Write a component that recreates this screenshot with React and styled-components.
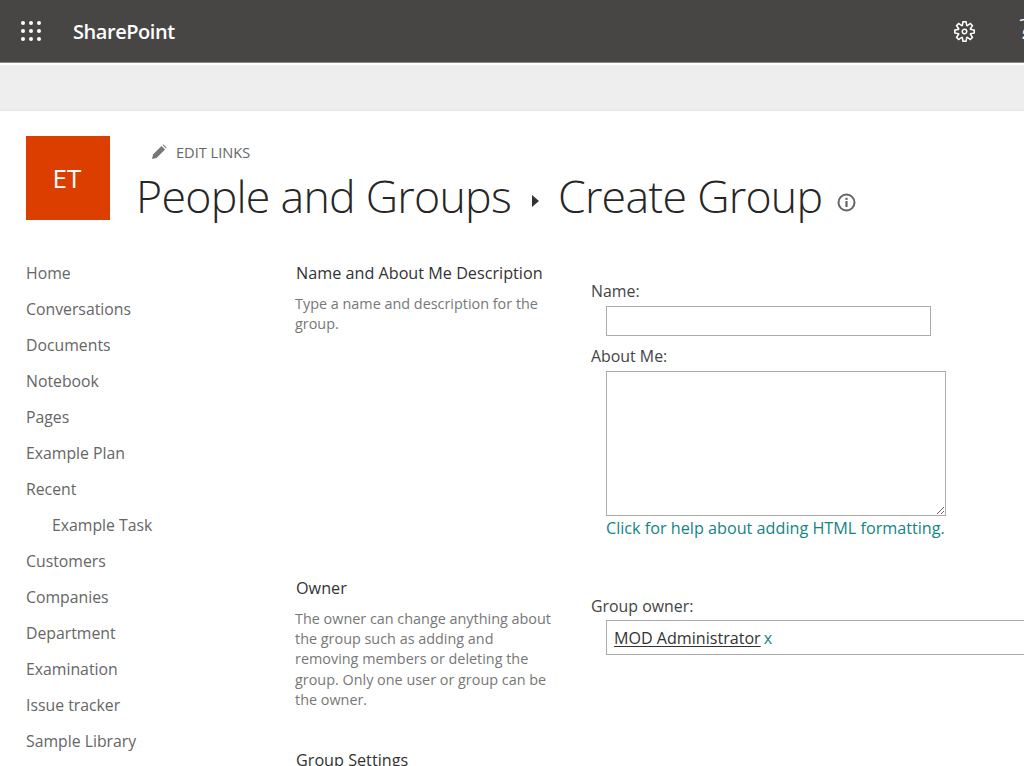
import React from "react";
import styled, { createGlobalStyle } from "styled-components";
import { VscSettingsGear } from "react-icons/vsc";

const Global = createGlobalStyle`
  html, body { margin: 0; padding: 0; background: #fff; }
  body { font-family: "Open Sans", "Noto Sans", sans-serif; color: #333; }
`;

const Page = styled.div`
  width: 1024px;
  height: 766px;
  overflow: hidden;
`;

const SuiteBar = styled.header`
  height: 62px;
  background: #484644;
  border-bottom: 1px solid #8a8886;
  display: flex;
  align-items: center;
  padding: 0 0 0 21px;
  color: #fff;
`;

const Brand = styled.span`
  margin-left: 32px;
  font-size: 20px;
  font-weight: 600;
  letter-spacing: -0.45px;
`;

const BarIcons = styled.div`
  margin-left: auto;
  display: flex;
  align-items: center;
  width: 70px;
  gap: 44px;
  overflow: hidden;
  height: 100%;
`;

const GearIcon = styled(VscSettingsGear)`
  flex: none;
  color: #fff;
`;

const HelpGlyph = styled.span`
  font-size: 28px;
  font-weight: 300;
  line-height: 1;
  margin-top: -6px;
`;

const RibbonBand = styled.div`
  margin-top: 2px;
  height: 45px;
  background: #eeeeee;
  border-bottom: 1px solid #e4e4e4;
`;

const TitleRow = styled.div`
  display: flex;
  padding: 25px 0 0 26px;
  height: 103px;
`;

const SiteLogo = styled.div`
  width: 84px;
  height: 84px;
  background: #dc3e00;
  color: #fff;
  font-size: 26px;
  padding-right: 2px;
  box-sizing: border-box;
  display: flex;
  align-items: center;
  justify-content: center;
`;

const TitleBlock = styled.div`
  margin-left: 26px;
`;

const EditLinks = styled.div`
  display: flex;
  align-items: center;
  gap: 9px;
  margin-left: 15px;
  margin-top: 4px;
  height: 24px;
  font-size: 14.6px;
  color: #666;
`;

const PageTitle = styled.h1`
  margin: 4px 0 0;
  display: flex;
  align-items: center;
  font-size: 44.7px;
  font-weight: 300;
  line-height: 56px;
  letter-spacing: -0.75px;
  color: #262626;
  white-space: nowrap;
`;

const Caret = styled.span`
  width: 0;
  height: 0;
  margin: 9px 19px 0 21px;
  border-left: 7px solid #333;
  border-top: 6px solid transparent;
  border-bottom: 6px solid transparent;
`;

const InfoIcon = styled.svg`
  margin: 13px 0 0 15px;
`;

const Content = styled.div`
  display: flex;
  padding-left: 26px;
  margin-top: 16px;
`;

const LeftNav = styled.nav`
  width: 269px;
  flex: none;
  display: flex;
  flex-direction: column;
`;

const NavItem = styled.a`
  height: 36px;
  line-height: 36px;
  font-size: 15.8px;
  color: #666;
  padding-left: ${({ $sub }) => ($sub ? "26px" : "0")};
  white-space: nowrap;
`;

const Form = styled.div`
  flex: 1;
  display: flex;
  flex-direction: column;
  min-width: 0;
`;

const Section = styled.section`
  display: grid;
  grid-template-columns: 296px 1fr;
  min-height: ${({ $height }) => $height}px;
`;

const Intro = styled.div`
  padding-top: 6px;
`;

const SectionTitle = styled.h3`
  margin: 0 0 9px 1px;
  font-size: 16.2px;
  font-weight: 400;
  line-height: 24px;
  color: #333;
`;

const Description = styled.p`
  margin: 0;
  width: 262px;
  font-size: 14.4px;
  line-height: 20.2px;
  color: #777;
`;

const Field = styled.div`
  padding-top: ${({ $top }) => $top}px;
`;

const FieldLabel = styled.label`
  display: block;
  font-size: 15.9px;
  line-height: 22px;
  color: #444;
`;

const NameInput = styled.input`
  display: block;
  box-sizing: border-box;
  margin: 4px 0 9px 15px;
  width: 325px;
  height: 30px;
  border: 1px solid #ababab;
  background: #fff;
`;

const AboutBox = styled.textarea`
  display: block;
  box-sizing: border-box;
  margin: 4px 0 0 15px;
  width: 340px;
  height: 145px;
  border: 1px solid #ababab;
  background: #fff;
`;

const HelpLink = styled.a`
  display: block;
  margin: 1px 0 0 15px;
  font-size: 16.2px;
  line-height: 22px;
  color: #138484;
  white-space: nowrap;
`;

const PeoplePicker = styled.div`
  box-sizing: border-box;
  margin: 3px 0 0 15px;
  width: 500px;
  height: 35px;
  border: 1px solid #ababab;
  padding-left: 7px;
  display: flex;
  align-items: center;
  gap: 3px;
  font-size: 16.1px;
`;

const Person = styled.span`
  color: #333;
  text-decoration: underline;
  text-underline-offset: 2px;
`;

const RemoveLink = styled.span`
  color: #138484;
`;

const navItems = [
  ["Home"],
  ["Conversations"],
  ["Documents"],
  ["Notebook"],
  ["Pages"],
  ["Example Plan"],
  ["Recent"],
  ["Example Task", true],
  ["Customers"],
  ["Companies"],
  ["Department"],
  ["Examination"],
  ["Issue tracker"],
  ["Sample Library"],
];

const Waffle = () => (
  <svg width="20" height="20" viewBox="0 0 20 20" fill="#fff">
    {[2, 10, 18].map((y) =>
      [2, 10, 18].map((x) => <circle key={`${x}-${y}`} cx={x} cy={y} r="2" />)
    )}
  </svg>
);

const Pencil = () => (
  <svg width="16" height="16" viewBox="0 0 16 16" fill="#777">
    <path d="M1 15l1-4.5L10.5 2l3.5 3.5L5.5 14z" />
    <path d="M11.5 1l1-.5 3 3-.5 1z" />
  </svg>
);

export default function App() {
  return (
    <Page>
      <Global />
      <SuiteBar>
        <Waffle />
        <Brand>SharePoint</Brand>
        <BarIcons>
          <GearIcon size={21} />
          <HelpGlyph>?</HelpGlyph>
        </BarIcons>
      </SuiteBar>
      <RibbonBand />
      <TitleRow>
        <SiteLogo>ET</SiteLogo>
        <TitleBlock>
          <EditLinks>
            <Pencil />
            EDIT LINKS
          </EditLinks>
          <PageTitle>
            People and Groups
            <Caret />
            Create Group
            <InfoIcon width="19" height="19" viewBox="0 0 19 19">
              <circle cx="9.5" cy="9.5" r="8" fill="none" stroke="#666" strokeWidth="2" />
              <rect x="8.4" y="8" width="2.2" height="6" fill="#666" />
              <rect x="8.4" y="4.8" width="2.2" height="2.1" fill="#666" />
            </InfoIcon>
          </PageTitle>
        </TitleBlock>
      </TitleRow>
      <Content>
        <LeftNav>
          {navItems.map(([label, sub]) => (
            <NavItem key={label} $sub={sub}>
              {label}
            </NavItem>
          ))}
        </LeftNav>
        <Form>
          <Section $height={315}>
            <Intro>
              <SectionTitle>Name and About Me Description</SectionTitle>
              <Description>Type a name and description for the group.</Description>
            </Intro>
            <Field $top={25}>
              <FieldLabel>Name:</FieldLabel>
              <NameInput />
              <FieldLabel>About Me:</FieldLabel>
              <AboutBox />
              <HelpLink>Click for help about adding HTML formatting.</HelpLink>
            </Field>
          </Section>
          <Section $height={172}>
            <Intro>
              <SectionTitle>Owner</SectionTitle>
              <Description>
                The owner can change anything about the group such as adding and removing members or
                deleting the group. Only one user or group can be the owner.
              </Description>
            </Intro>
            <Field $top={25}>
              <FieldLabel>Group owner:</FieldLabel>
              <PeoplePicker>
                <Person>MOD Administrator</Person>
                <RemoveLink>x</RemoveLink>
              </PeoplePicker>
            </Field>
          </Section>
          <Section $height={40}>
            <Intro>
              <SectionTitle>Group Settings</SectionTitle>
            </Intro>
          </Section>
        </Form>
      </Content>
    </Page>
  );
}
